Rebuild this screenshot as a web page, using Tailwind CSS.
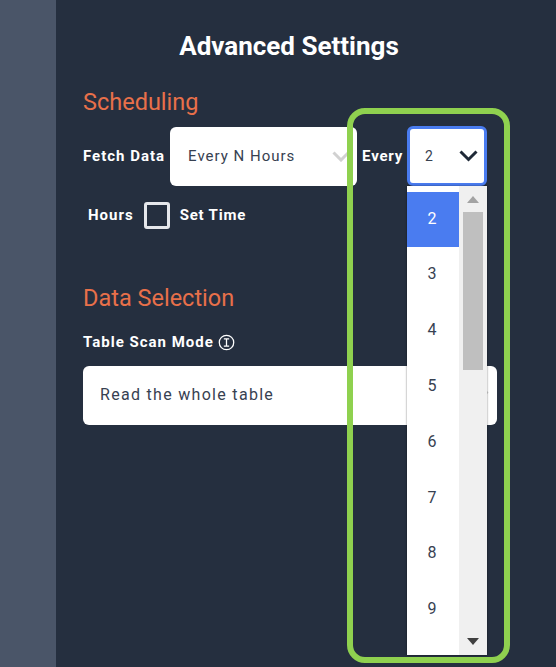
<!DOCTYPE html>
<html lang="en">
<head>
  <meta charset="utf-8" />
  <meta content="width=device-width, initial-scale=1.0" name="viewport" />
  <title>Advanced Settings</title>
  <script src="https://cdn.jsdelivr.net/npm/@tailwindcss/browser@4"></script>
</head>
<body class="bg-[#252f3f] font-['Roboto',sans-serif] overflow-hidden">
  <div class="relative flex h-[667px] w-[556px] overflow-hidden">
    <!-- Left strip -->
    <div class="w-[56px] shrink-0 bg-[#4a5568]"></div>

    <!-- Panel -->
    <div class="w-[500px] pl-[27px] pt-[30px]">
      <h1 class="w-[412px] text-center text-[26px] leading-[32px] font-bold text-white">Advanced Settings</h1>

      <!-- Scheduling -->
      <h2 class="mt-[25px] text-[23.5px] leading-[30px] text-[#e8704a]">Scheduling</h2>
      <div class="mt-[9px] flex items-center">
        <span class="text-[15px] font-bold tracking-[1px] text-white">Fetch Data</span>
        <div class="ml-[5px] flex h-[59px] w-[187px] items-center justify-between rounded-[6px] bg-white pl-[18px] pr-[7px]">
          <span class="text-[15px] tracking-[1px] text-[#374151]">Every N Hours</span>
          <svg width="18" height="11" viewBox="0 0 18 11" fill="none" stroke="#d1d1d1" stroke-width="3"><path d="M1.5 1.5 9 9l7.5-7.5" /></svg>
        </div>
        <span class="ml-[5px] w-[45px] text-[15px] font-bold tracking-[0.8px] text-white">Every</span>
        <div class="flex h-[60px] w-[80px] items-center justify-between rounded-[6px] border-[3px] border-[#4a7cf0] bg-white pl-[15px] pr-[6px]">
          <span class="text-[14px] text-[#374151]">2</span>
          <svg width="19" height="12" viewBox="0 0 19 12" fill="none" stroke="#1f2937" stroke-width="3"><path d="M1.5 1.5 9.5 9.5l8-8" /></svg>
        </div>
      </div>
      <div class="mt-[16px] flex items-center pl-[5px]">
        <span class="text-[15px] font-bold tracking-[1px] text-white">Hours</span>
        <div class="ml-[10px] h-[27px] w-[26px] rounded-[3px] border-[3px] border-[#e5e7eb]"></div>
        <span class="ml-[10px] text-[15px] font-bold tracking-[0.8px] text-white">Set Time</span>
      </div>

      <!-- Data Selection -->
      <h2 class="mt-[54px] text-[23.5px] leading-[30px] text-[#e8704a]">Data Selection</h2>
      <div class="mt-[18px] flex items-center gap-[4px]">
        <span class="text-[15px] font-bold tracking-[1px] text-white">Table Scan Mode</span>
        <svg width="17" height="17" viewBox="0 0 16 16" fill="none" stroke="#fff" stroke-width="1.2"><circle cx="8" cy="8" r="6.8" /><path d="M5.5 4.5h5M8 4.5v7M5.5 11.5h5" /></svg>
      </div>
      <div class="mt-[12px] flex h-[59px] w-[414px] items-center justify-between rounded-[6px] bg-white pl-[17px] pr-[8px]">
        <span class="text-[16px] tracking-[1.3px] text-[#374151]">Read the whole table</span>
        <svg width="18" height="11" viewBox="0 0 18 11" fill="none" stroke="#d1d1d1" stroke-width="3"><path d="M1.5 1.5 9 9l7.5-7.5" /></svg>
      </div>
    </div>

    <!-- Open dropdown list -->
    <div class="absolute left-[407px] top-[186px] flex h-[469px] w-[80px] bg-white shadow-[0_0_2px_rgba(0,0,0,0.5)]">
      <ul class="w-[52px] pt-[6px] text-center text-[16px] text-[#374151]">
        <li class="flex h-[55px] items-center justify-center bg-[#4a7cf0] pb-[2px] pr-[2px] text-white">2</li>
        <li class="flex h-[56px] items-center justify-center pb-[2px] pr-[2px]">3</li>
        <li class="flex h-[56px] items-center justify-center pb-[2px] pr-[2px]">4</li>
        <li class="flex h-[56px] items-center justify-center pb-[2px] pr-[2px]">5</li>
        <li class="flex h-[56px] items-center justify-center pb-[2px] pr-[2px]">6</li>
        <li class="flex h-[55px] items-center justify-center pb-[2px] pr-[2px]">7</li>
        <li class="flex h-[56px] items-center justify-center pb-[2px] pr-[2px]">8</li>
        <li class="flex h-[56px] items-center justify-center pb-[2px] pr-[2px]">9</li>
      </ul>
      <div class="flex w-[28px] flex-col items-center bg-[#f0f0f0]">
        <svg class="mt-[10px]" width="12" height="7" viewBox="0 0 12 7" fill="#a3a3a3"><path d="M6 0l6 7H0z" /></svg>
        <div class="mt-[9px] h-[158px] w-[20px] bg-[#bfbfbf]"></div>
        <svg class="mt-auto mb-[10px]" width="12" height="7" viewBox="0 0 12 7" fill="#404040"><path d="M0 0h12L6 7z" /></svg>
      </div>
    </div>

    <!-- Green highlight -->
    <div class="absolute left-[347px] top-[108px] h-[555px] w-[163px] rounded-[18px] border-[6px] border-[#8fd14f]"></div>
  </div>
</body>
</html>
